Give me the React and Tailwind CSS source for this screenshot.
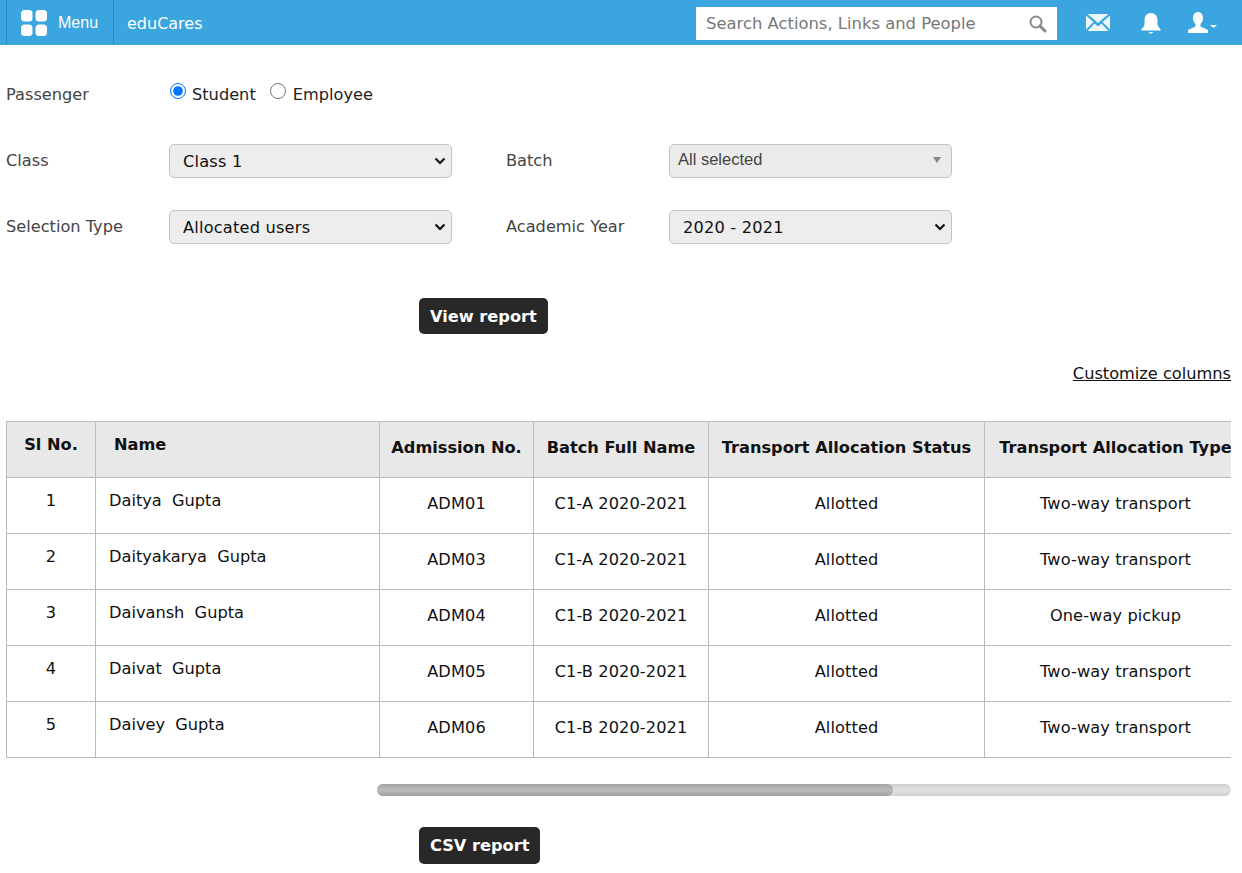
import React from 'react';

const rows = [
  ['1', 'Daitya  Gupta', 'ADM01', 'C1-A 2020-2021', 'Allotted', 'Two-way transport'],
  ['2', 'Daityakarya  Gupta', 'ADM03', 'C1-A 2020-2021', 'Allotted', 'Two-way transport'],
  ['3', 'Daivansh  Gupta', 'ADM04', 'C1-B 2020-2021', 'Allotted', 'One-way pickup'],
  ['4', 'Daivat  Gupta', 'ADM05', 'C1-B 2020-2021', 'Allotted', 'Two-way transport'],
  ['5', 'Daivey  Gupta', 'ADM06', 'C1-B 2020-2021', 'Allotted', 'Two-way transport'],
];

const Select = ({ value }) => (
  <div className="relative w-[283px] h-[34px]">
    <select
      defaultValue={value}
      className="appearance-none w-full h-full pl-[13px] pt-[3px] bg-[#ededed] border border-[#c4c4c4] rounded-[5px] text-[16.2px] tracking-[0.2px] text-[#111]"
    >
      <option>{value}</option>
    </select>
    <svg width="12" height="8" viewBox="0 0 12 8" fill="none" stroke="#111" strokeWidth="2.2" className="absolute right-[6px] top-[13px] pointer-events-none">
      <path d="M1.500 1.500L6 6l4.500-4.500" />
    </svg>
  </div>
);

const App = () => {
  return (
    <div className="w-[1242px] h-[873px] overflow-hidden bg-white text-[16.2px] text-[#222] font-['DejaVu_Sans','Noto_Sans',sans-serif]">
      {/* Top bar */}
      <div className="h-[45px] bg-[#3aa5df] flex items-center text-white">
        <div className="ml-[6px] h-[45px] w-[108px] flex items-center border-x border-[#2b8cc4]">
          <svg width="26" height="26" viewBox="0 0 26 26" className="ml-[14px]" fill="white">
            <rect x="0" y="0" width="11.5" height="11.5" rx="3.5" />
            <rect x="14.5" y="0" width="11.5" height="11.5" rx="3.5" />
            <rect x="0" y="14.5" width="11.5" height="11.5" rx="3.5" />
            <rect x="14.5" y="14.5" width="11.5" height="11.5" rx="3.5" />
          </svg>
          <span className="ml-[11px] pt-[1px] text-[16px] font-['Liberation_Sans',sans-serif]">Menu</span>
        </div>
        <span className="ml-[13px] pt-[3px] text-[16px]">eduCares</span>
        <div className="ml-auto w-[361px] h-[33px] bg-white flex items-center justify-between pl-[10px] pr-[10px] text-[#777] mt-[1px]">
          <span className="text-[16.4px] pt-[2px]">Search Actions, Links and People</span>
          <svg width="19" height="19" viewBox="0 0 19 19" fill="none" stroke="#8a8a8a">
            <circle cx="8" cy="8" r="5.5" strokeWidth="2" />
            <path d="M12 12l5 5" strokeWidth="3" strokeLinecap="round" />
          </svg>
        </div>
        <svg width="24" height="17" viewBox="0 0 24 17" className="ml-[29px] opacity-90" fill="white">
          <path d="M1.5 0h21L12 9z" />
          <path d="M0 1.5v14l7.5-7.5zM24 1.5v14L16.500 8z" />
          <path d="M1.500 17h21L15.500 9.500 12 12.500 8.500 9.500z" />
        </svg>
        <svg width="20" height="22" viewBox="0 0 20 22" className="ml-[31px]" fill="white">
          <path d="M10 1C6 1 3.500 4 3.500 8v4c0 2-1 3-3 5v1.500h19V17c-2-2-3-3-3-5V8c0-4-2.500-7-6.500-7z" />
          <path d="M7.500 20h5L10 22z" />
        </svg>
        <svg width="30" height="22" viewBox="0 0 30 22" className="ml-[27px] mr-[24px]" fill="white">
          <path d="M10 0C7 0 5 2.500 5 6c0 2.500 1 4.500 2.500 6v2.500L0 18v3h20v-3l-7.500-3.500V12c1.500-1.500 2.500-3.500 2.500-6 0-3.500-2-6-5-6z" />
          <path d="M22 13h7l-3.500 3z" />
        </svg>
      </div>

      {/* Filter form */}
      <div className="pl-[6px] mt-[38px] flex items-center h-[24px]">
        <span className="w-[164px] text-[#444]">Passenger</span>
        <input type="radio" defaultChecked className="w-4 h-4 m-0 mb-[8px] accent-[#0075ff]" />
        <span className="ml-[6px]">Student</span>
        <input type="radio" className="ml-[14px] w-4 h-4 m-0 mb-[8px]" />
        <span className="ml-[7px]">Employee</span>
      </div>

      <div className="pl-[6px] mt-[37px] flex items-start h-[34px]">
        <span className="w-[163px] pt-[5px] text-[#444]">Class</span>
        <Select value="Class 1" />
        <span className="ml-[54px] w-[163px] pt-[5px] text-[#444]">Batch</span>
        <div className="w-[283px] h-[34px] flex items-center justify-between pb-[3px] pl-[8px] pr-[10px] bg-[#ebebeb] border border-[#c4c4c4] rounded-[5px] text-[16.5px] text-[#444] font-['Liberation_Sans',sans-serif]">
          <span>All selected</span>
          <span className="w-0 h-0 border-x-[4px] border-x-transparent border-t-[6px] border-t-[#888]" />
        </div>
      </div>

      <div className="pl-[6px] mt-[32px] flex items-start h-[34px]">
        <span className="w-[163px] pt-[5px] text-[#444]">Selection Type</span>
        <Select value="Allocated users" />
        <span className="ml-[54px] w-[163px] pt-[5px] text-[#444]">Academic Year</span>
        <Select value="2020 - 2021" />
      </div>

      <button className="ml-[419px] mt-[54px] h-[36px] px-[11px] pt-[2px] bg-[#282828] text-white font-bold rounded-[5px] block">View report</button>

      <div className="mt-[27px] pr-[11px] pt-[1px] text-right h-[24px]">
        <span className="underline text-[#111]">Customize columns</span>
      </div>

      {/* Report table */}
      <div className="ml-[6px] mt-[36px] w-[1225px] overflow-hidden">
        <table className="w-[1240px] table-fixed border-collapse text-[#111]">
          <colgroup>
            <col className="w-[89px]" />
            <col className="w-[284px]" />
            <col className="w-[154px]" />
            <col className="w-[175px]" />
            <col className="w-[276px]" />
            <col className="w-[262px]" />
          </colgroup>
          <thead>
            <tr className="h-[56px] bg-[#e8e8e8] font-bold whitespace-nowrap">
              <th className="border border-[#bbb] align-top pt-[11px] font-bold">Sl No.</th>
              <th className="border border-[#bbb] align-top pt-[11px] pl-[18px] text-left font-bold">Name</th>
              <th className="border border-[#bbb] pb-[2px] font-bold">Admission No.</th>
              <th className="border border-[#bbb] pb-[2px] font-bold">Batch Full Name</th>
              <th className="border border-[#bbb] pb-[2px] font-bold">Transport Allocation Status</th>
              <th className="border border-[#bbb] pb-[2px] font-bold">Transport Allocation Type</th>
            </tr>
          </thead>
          <tbody>
            {rows.map((row) => (
              <tr key={row[0]} className="h-[56px]">
                <td className="border border-[#bbb] align-top pt-[11px] text-center">{row[0]}</td>
                <td className="border border-[#bbb] align-top pt-[11px] pl-[13px] whitespace-pre">{row[1]}</td>
                <td className="border border-[#bbb] pb-[2px] text-center tracking-[0.1px]">{row[2]}</td>
                <td className="border border-[#bbb] pb-[2px] text-center tracking-[0.1px]">{row[3]}</td>
                <td className="border border-[#bbb] pb-[2px] text-center tracking-[0.1px]">{row[4]}</td>
                <td className="border border-[#bbb] pb-[2px] text-center tracking-[0.1px]">{row[5]}</td>
              </tr>
            ))}
          </tbody>
        </table>
      </div>

      {/* Table scrollbar */}
      <div className="ml-[377px] mt-[26px] w-[854px] h-[12px] rounded-full bg-linear-to-b from-[#cfcfcf] via-[#e2e2e2] to-[#cfcfcf]">
        <div className="w-[516px] h-full rounded-full bg-linear-to-b from-[#a4a4a4] via-[#bcbcbc] to-[#a0a0a0]" />
      </div>

      <button className="ml-[419px] mt-[31px] h-[37px] px-[11px] pt-[2px] bg-[#282828] text-white font-bold rounded-[5px] block">CSV report</button>
    </div>
  );
};

export default App;
